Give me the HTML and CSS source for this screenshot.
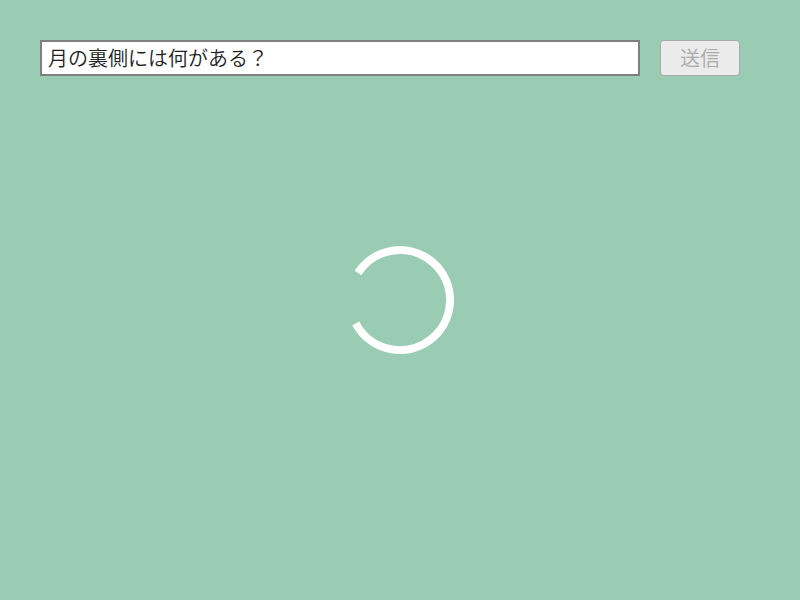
FILE: index.html
```html
<!DOCTYPE html>
<html lang="ja">
<head>
<meta charset="utf-8">
<title>質問</title>
<link rel="stylesheet" href="styles.css">
</head>
<body>
<form class="ask">
<input class="question" type="text" value="月の裏側には何がある？">
<button class="send" type="button" disabled>送信</button>
</form>
<main class="stage">
<svg class="spinner" viewBox="-60 -60 120 120" aria-hidden="true">
<path d="M-42.05 -27.05A50 50 0 1 1 -44.25 23.28"/>
</svg>
</main>
</body>
</html>
```
FILE: styles.css
```css
* {
  box-sizing: border-box;
}

body {
  margin: 0;
  height: 100vh;
  display: grid;
  grid-template-rows: 76px 1fr 76px;
  overflow: hidden;
  background: #9accb4;
  font-family: "Noto Sans CJK JP", sans-serif;
}

.ask {
  display: flex;
  gap: 20px;
  padding: 40px 60px 0 40px;
}

.question {
  width: 600px;
  height: 36px;
  padding: 0 6px 2px;
  border: 2px solid #808080;
  background: #fff;
  color: #222;
  font: 350 20px "Noto Sans CJK JP", sans-serif;
}

.send {
  width: 80px;
  height: 36px;
  padding: 0 0 1px;
  border: 1px solid #acacac;
  border-radius: 4px;
  background: #ebebeb;
  color: #aaa;
  font: 350 20px "Noto Sans CJK JP", sans-serif;
}

.stage {
  display: grid;
  place-items: center;
}

.spinner {
  width: 120px;
  height: 120px;
  fill: none;
  stroke: #fff;
  stroke-width: 8;
}
```
